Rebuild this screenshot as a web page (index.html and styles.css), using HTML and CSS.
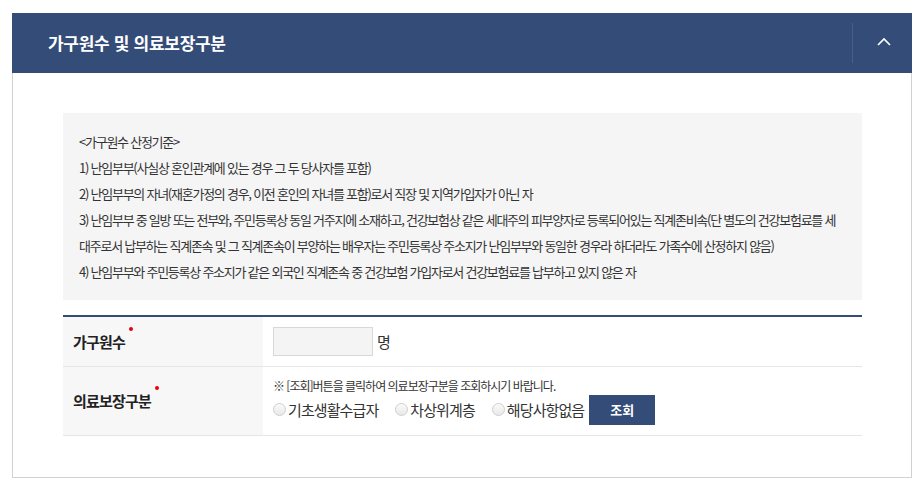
FILE: index.html
```html
<!DOCTYPE html>
<html lang="ko">
<head>
<meta charset="utf-8">
<title>가구원수 및 의료보장구분</title>
<link rel="stylesheet" href="styles.css">
</head>
<body>
<section class="panel">
  <header class="panel-head">
    <h2 class="panel-title">가구원수 및 의료보장구분</h2>
    <button class="toggle" type="button" aria-label="접기">
      <svg width="14" height="9" viewBox="0 0 14 9"><path d="M1 8 L7 2 L13 8" fill="none" stroke="#ffffff" stroke-width="1.6"/></svg>
    </button>
  </header>
  <div class="panel-body">
    <div class="guide">
      <p>&lt;가구원수 산정기준&gt;</p>
      <p>1) 난임부부(사실상 혼인관계에 있는 경우 그 두 당사자를 포함)</p>
      <p>2) 난임부부의 자녀(재혼가정의 경우, 이전 혼인의 자녀를 포함)로서 직장 및 지역가입자가 아닌 자</p>
      <p>3) 난임부부 중 일방 또는 전부와, 주민등록상 동일 거주지에 소재하고, 건강보험상 같은 세대주의 피부양자로 등록되어있는 직계존비속(단 별도의 건강보험료를 세대주로서 납부하는 직계존속 및 그 직계존속이 부양하는 배우자는 주민등록상 주소지가 난임부부와 동일한 경우라 하더라도 가족수에 산정하지 않음)</p>
      <p>4) 난임부부와 주민등록상 주소지가 같은 외국인 직계존속 중 건강보험 가입자로서 건강보험료를 납부하고 있지 않은 자</p>
    </div>
    <table class="form-table">
      <tr class="row-1">
        <th><span class="label">가구원수<i class="req"></i></span></th>
        <td><input class="num" type="text"><span class="unit">명</span></td>
      </tr>
      <tr class="row-2">
        <th><span class="label">의료보장구분<i class="req"></i></span></th>
        <td>
          <p class="note">※ [조회]버튼을 클릭하여 의료보장구분을 조회하시기 바랍니다.</p>
          <div class="choices">
            <label class="opt"><input type="radio" name="med"><span>기초생활수급자</span></label>
            <label class="opt"><input type="radio" name="med"><span>차상위계층</span></label>
            <label class="opt"><input type="radio" name="med"><span>해당사항없음</span></label>
            <button class="btn" type="button">조회</button>
          </div>
        </td>
      </tr>
    </table>
  </div>
</section>
</body>
</html>
```

FILE: styles.css
```css
* { box-sizing: border-box; }
body {
  margin: 0;
  background: #ffffff;
  font-family: "Noto Sans CJK KR", "Noto Sans", sans-serif;
  color: #333333;
}
.panel {
  width: 900px;
  margin: 13px 0 0 12px;
  border: 1px solid #d2d2d2;
  border-top: none;
}
.panel-head {
  height: 60px;
  margin: 0 -1px;
  background: #344c78;
  display: flex;
  align-items: center;
  justify-content: space-between;
  padding-left: 36px;
}
.panel-title {
  margin: 0;
  color: #ffffff;
  font-size: 17px;
  font-weight: 700;
  letter-spacing: -0.3px;
  line-height: 24px;
}
.toggle {
  width: 60px;
  height: 40px;
  border: none;
  border-left: 1px solid #4a5f88;
  background: transparent;
  padding: 0;
  display: flex;
  align-items: center;
  justify-content: center;
  cursor: pointer;
}
.toggle svg { display: block; margin-left: 2px; margin-bottom: 4px; }
.panel-body {
  padding: 40px 49px 41px 50px;
}
.guide {
  background: #f5f5f5;
  padding: 16px 20px 15px 16px;
  margin-bottom: 15px;
}
.guide p {
  margin: 0;
  font-size: 13px;
  line-height: 26px;
  letter-spacing: -1.25px;
  color: #333333;
}
.form-table {
  width: 100%;
  border-collapse: collapse;
  border-top: 2px solid #344c78;
}
.form-table th,
.form-table td {
  border-bottom: 1px solid #e6e6e6;
  text-align: left;
  vertical-align: middle;
  padding: 0 10px;
}
.form-table th {
  width: 200px;
  background: #f7f7f7;
  font-size: 15px;
  font-weight: 700;
  color: #222222;
  letter-spacing: -0.8px;
}
.row-1 th, .row-1 td { height: 50px; }
.row-2 th, .row-2 td { height: 69px; }
.row-2 td { padding-top: 9px; padding-bottom: 9px; }
.label {
  position: relative;
  padding-right: 8px;
}
.req {
  position: absolute;
  right: 0;
  top: -4px;
  width: 4px;
  height: 4px;
  border-radius: 50%;
  background: #e60012;
}
.num {
  width: 100px;
  height: 29px;
  border: 1px solid #d8d8d8;
  background: #f4f4f4;
  vertical-align: middle;
  margin: 0;
}
.unit {
  margin-left: 4px;
  font-size: 15px;
  vertical-align: middle;
  color: #333333;
}
.note {
  margin: 0;
  font-size: 12px;
  line-height: 18px;
  letter-spacing: -1px;
  color: #333333;
}
.choices {
  display: flex;
  align-items: center;
  height: 30px;
}
.opt {
  display: flex;
  align-items: center;
  font-size: 15px;
  letter-spacing: -0.9px;
  color: #333333;
  margin-right: 17px;
}
.opt:nth-child(3) { margin-right: 5px; }
.opt input {
  appearance: none;
  -webkit-appearance: none;
  width: 13px;
  height: 13px;
  margin: 0 2px 0 0;
  border: 1px solid #cfcfcf;
  border-radius: 50%;
  background: linear-gradient(#fafafa, #e9e9e9);
}
.btn {
  width: 66px;
  height: 30px;
  border: none;
  background: #344c78;
  color: #ffffff;
  font-family: inherit;
  font-size: 13px;
  font-weight: 700;
  padding: 0;
}
```
